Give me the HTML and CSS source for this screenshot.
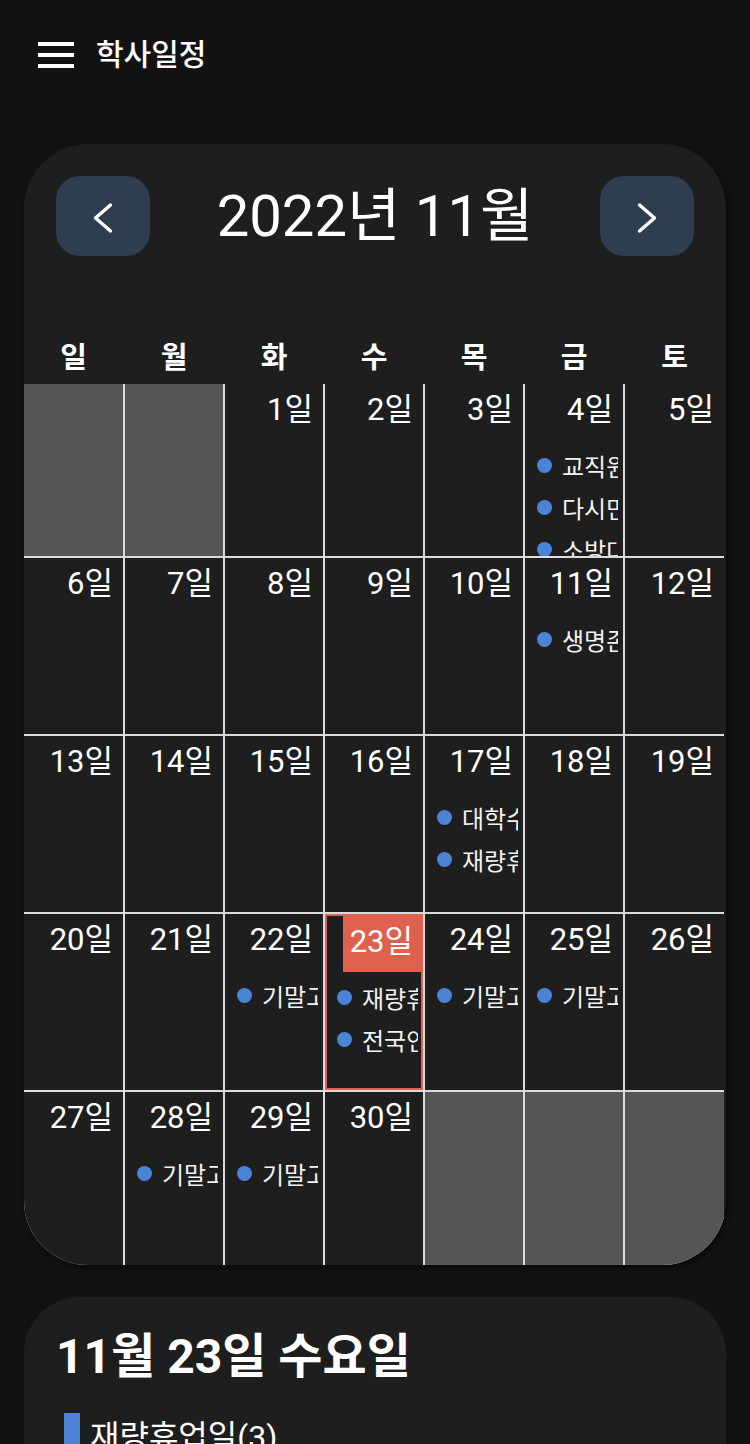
FILE: index.html
```html
<!DOCTYPE html>
<html lang="ko">
<head>
<meta charset="utf-8">
<title>학사일정</title>
<link rel="stylesheet" href="styles.css">
</head>
<body>
<header class="topbar">
  <button class="menu" aria-label="메뉴"><span></span><span></span><span></span></button>
  <h1 class="page-title">학사일정</h1>
</header>
<main class="content">
  <section class="calendar">
    <div class="cal-nav">
      <button class="nav-btn" aria-label="이전 달">
        <svg class="chev" viewBox="0 0 24 32" width="24" height="32"><path d="M19.5 3 L4.5 16 L19.5 29"/></svg>
      </button>
      <h2 class="month">2022년 11월</h2>
      <button class="nav-btn" aria-label="다음 달">
        <svg class="chev" viewBox="0 0 24 32" width="24" height="32"><path d="M4.5 3 L19.5 16 L4.5 29"/></svg>
      </button>
    </div>
    <div class="weekdays">
      <span>일</span><span>월</span><span>화</span><span>수</span><span>목</span><span>금</span><span>토</span>
    </div>
    <div class="grid">
      <div class="cell blank"></div>
      <div class="cell blank"></div>
      <div class="cell"><span class="day">1일</span></div>
      <div class="cell"><span class="day">2일</span></div>
      <div class="cell"><span class="day">3일</span></div>
      <div class="cell"><span class="day">4일</span>
        <ul class="events">
          <li class="event"><i class="dot"></i><span class="ev-text">교직원연수</span></li>
          <li class="event"><i class="dot"></i><span class="ev-text">다시만나는날</span></li>
          <li class="event"><i class="dot"></i><span class="ev-text">소방대피훈련</span></li>
        </ul>
      </div>
      <div class="cell"><span class="day">5일</span></div>

      <div class="cell"><span class="day">6일</span></div>
      <div class="cell"><span class="day">7일</span></div>
      <div class="cell"><span class="day">8일</span></div>
      <div class="cell"><span class="day">9일</span></div>
      <div class="cell"><span class="day">10일</span></div>
      <div class="cell"><span class="day">11일</span>
        <ul class="events">
          <li class="event"><i class="dot"></i><span class="ev-text">생명존중교육</span></li>
        </ul>
      </div>
      <div class="cell"><span class="day">12일</span></div>

      <div class="cell"><span class="day">13일</span></div>
      <div class="cell"><span class="day">14일</span></div>
      <div class="cell"><span class="day">15일</span></div>
      <div class="cell"><span class="day">16일</span></div>
      <div class="cell"><span class="day">17일</span>
        <ul class="events">
          <li class="event"><i class="dot"></i><span class="ev-text">대학수학능력시험</span></li>
          <li class="event"><i class="dot"></i><span class="ev-text">재량휴업일</span></li>
        </ul>
      </div>
      <div class="cell"><span class="day">18일</span></div>
      <div class="cell"><span class="day">19일</span></div>

      <div class="cell"><span class="day">20일</span></div>
      <div class="cell"><span class="day">21일</span></div>
      <div class="cell"><span class="day">22일</span>
        <ul class="events">
          <li class="event"><i class="dot"></i><span class="ev-text">기말고사</span></li>
        </ul>
      </div>
      <div class="cell today"><span class="day">23일</span>
        <ul class="events">
          <li class="event"><i class="dot"></i><span class="ev-text">재량휴업일</span></li>
          <li class="event"><i class="dot"></i><span class="ev-text">전국연합학력평가</span></li>
        </ul>
      </div>
      <div class="cell"><span class="day">24일</span>
        <ul class="events">
          <li class="event"><i class="dot"></i><span class="ev-text">기말고사</span></li>
        </ul>
      </div>
      <div class="cell"><span class="day">25일</span>
        <ul class="events">
          <li class="event"><i class="dot"></i><span class="ev-text">기말고사</span></li>
        </ul>
      </div>
      <div class="cell"><span class="day">26일</span></div>

      <div class="cell"><span class="day">27일</span></div>
      <div class="cell"><span class="day">28일</span>
        <ul class="events">
          <li class="event"><i class="dot"></i><span class="ev-text">기말고사</span></li>
        </ul>
      </div>
      <div class="cell"><span class="day">29일</span>
        <ul class="events">
          <li class="event"><i class="dot"></i><span class="ev-text">기말고사</span></li>
        </ul>
      </div>
      <div class="cell"><span class="day">30일</span></div>
      <div class="cell blank"></div>
      <div class="cell blank"></div>
      <div class="cell blank"></div>
    </div>
  </section>

  <section class="detail">
    <h2 class="detail-title">11월 23일 수요일</h2>
    <ul class="detail-list">
      <li class="detail-item">재량휴업일(3)</li>
      <li class="detail-item">전국연합학력평가</li>
    </ul>
  </section>
</main>
</body>
</html>
```

FILE: styles.css
```css
* { box-sizing: border-box; }

body {
  margin: 0;
  width: 750px;
  background: #121212;
  color: #ffffff;
  font-family: Roboto, "Noto Sans CJK KR", sans-serif;
}

.topbar {
  height: 110px;
  display: flex;
  align-items: center;
  gap: 22px;
  padding-left: 38px;
}

.menu {
  width: 36px;
  display: flex;
  flex-direction: column;
  gap: 7.5px;
  padding: 0;
  border: 0;
  background: none;
}

.menu span {
  display: block;
  height: 3.5px;
  background: #ffffff;
}

.page-title {
  margin: 0;
  font-size: 30px;
  font-weight: 500;
  line-height: 1;
}

.content {
  padding: 34px 24px 0;
  display: flex;
  flex-direction: column;
  gap: 32px;
}

.calendar {
  background: #1e1e1e;
  border-radius: 64px;
  overflow: hidden;
  box-shadow: 2px 3px 6px rgba(0, 0, 0, 0.55);
}

.cal-nav {
  display: flex;
  align-items: center;
  justify-content: space-between;
  padding: 32px 32px 0;
}

.nav-btn {
  width: 94px;
  height: 80px;
  border: 0;
  border-radius: 24px;
  background: #2f3d50;
  padding: 4px 0 0;
  display: flex;
  align-items: center;
  justify-content: center;
}

.chev path {
  fill: none;
  stroke: #ffffff;
  stroke-width: 3.4;
  stroke-linecap: round;
  stroke-linejoin: round;
}

.month {
  margin: 0;
  font-size: 58px;
  font-weight: 400;
  line-height: 80px;
}

.weekdays,
.grid {
  width: 700px;
  display: grid;
  grid-template-columns: 99px repeat(5, 98px) 99px;
  column-gap: 2px;
}

.weekdays {
  margin-top: 76px;
  height: 52px;
  line-height: 52px;
  text-align: center;
  font-size: 29px;
  font-weight: 700;
}

.grid {
  grid-template-rows: 172px repeat(3, 176px) 173px;
  row-gap: 2px;
  background: #dcdcdc;
}

.cell {
  background: #1e1e1e;
  overflow: hidden;
  display: flex;
  flex-direction: column;
  align-items: flex-end;
}

.cell.blank {
  background: #555555;
}

.day {
  font-size: 31px;
  line-height: 40px;
  padding: 6px 10px 10px 9px;
}

.cell.today {
  box-shadow: inset 0 0 0 2px #d9634f;
}

.cell.today .day {
  margin-top: 2px;
  padding-left: 7px;
  background: #e0604e;
}

.events {
  align-self: stretch;
  min-height: 0;
  list-style: none;
  margin: 4px 0 0;
  padding: 0 5px 0 12px;
}

.event {
  height: 42px;
  display: flex;
  align-items: center;
  gap: 10px;
  white-space: nowrap;
  overflow: hidden;
  font-size: 24px;
  color: #f2f2f2;
}

.ev-text {
  flex: 1 1 auto;
  min-width: 0;
  overflow: hidden;
}

.dot {
  flex: none;
  width: 15px;
  height: 15px;
  border-radius: 50%;
  background: #4b84d6;
}

.detail {
  background: #1e1e1e;
  border-radius: 56px;
  padding: 31px 32px 40px;
}

.detail-title {
  margin: 0;
  font-size: 48px;
  font-weight: 700;
  line-height: 58px;
}

.detail-list {
  list-style: none;
  margin: 27px 0 0 8px;
  padding: 0;
  display: flex;
  flex-direction: column;
  gap: 16px;
}

.detail-item {
  border-left: 16px solid #4b84d6;
  padding-left: 10px;
  font-size: 32px;
  line-height: 48px;
}
```
